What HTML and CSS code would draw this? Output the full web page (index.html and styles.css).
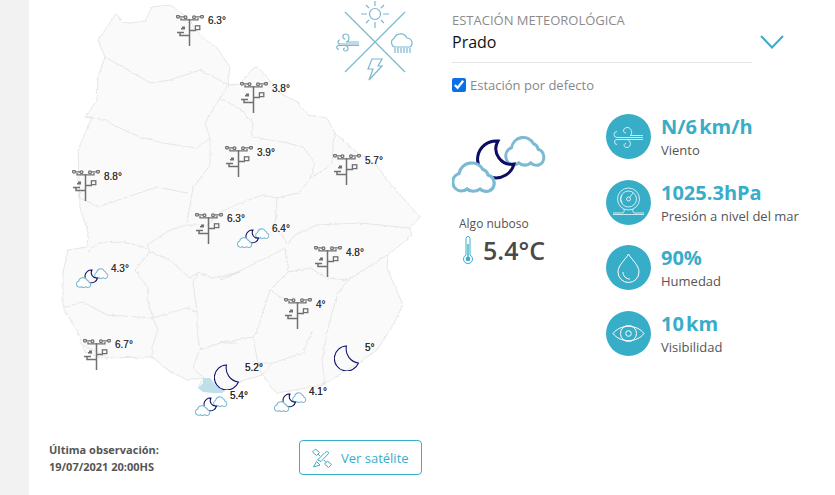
FILE: index.html
```html
<!DOCTYPE html>
<html lang="es">
<head>
<meta charset="utf-8">
<title>Estación meteorológica</title>
<link rel="stylesheet" href="styles.css">
</head>
<body>
<svg class="defs" width="0" height="0" aria-hidden="true">
  <defs>
    <filter id="rough" x="-5%" y="-5%" width="110%" height="110%" color-interpolation-filters="sRGB">
      <feTurbulence type="fractalNoise" baseFrequency="0.2" numOctaves="2" seed="4"/>
      <feDisplacementMap in="SourceGraphic" scale="3" xChannelSelector="R" yChannelSelector="G"/>
    </filter>
    <symbol id="station" viewBox="0 0 28 31">
      <g fill="none" stroke="#707070" stroke-width="1.300">
        <circle cx="2" cy="1.700" r="1.400"/><circle cx="9.500" cy="2.200" r="1.400"/><circle cx="18" cy="2.200" r="1.400"/><circle cx="26" cy="1.700" r="1.400"/>
        <path d="M3.500 1.800H8M19.500 1.800H24.500M5 3V4.800H22V3"/>
        <rect x="19.400" y="10.800" width="4.400" height="3.800"/>
      </g>
      <path d="M13.500 4V31M13.500 15.500H20M13.500 20.500H4V17.500M1 17.500H8M5 13.800H9M6 12.200H9" fill="none" stroke="#707070" stroke-width="1.500"/>
    </symbol>
    <path id="cloud" d="M9 56A9 9 0 0 1 7 38.500A13 13 0 0 1 31 34.500A7.500 7.500 0 0 1 36 40A8.500 8.500 0 0 1 37 56C33 57 30 56 28 54C24 57 18 57 15 54C13 56 11 56 9 56Z"/>
    <symbol id="cloudmoon" viewBox="0 0 95 58">
      <use href="#cloud" transform="translate(53 -25) scale(.92 .98)" fill="#fff" stroke="#7cb9d2" stroke-width="3.200"/>
      <path d="M46 6A18.500 18.500 0 1 0 62 29A15.500 15.500 0 0 1 46 6Z" fill="none" stroke="#0c0c66" stroke-width="3"/>
      <use href="#cloud" fill="#fff" stroke="#7cb9d2" stroke-width="3.200"/>
    </symbol>
    <symbol id="moon" viewBox="0 0 25 26">
      <path d="M12.500 1A12.500 12.500 0 1 0 24.500 18A14 14 0 0 1 12.500 1Z" fill="none" stroke="#14146e" stroke-width="1.100"/>
    </symbol>
  </defs>
</svg>

<div class="page">
  <aside class="strip"></aside>
  <section class="map-col">
    <div class="canvas">
      <svg class="country" viewBox="29 0 411 440" width="411" height="440" aria-hidden="true">
        <g filter="url(#rough)" stroke="#e6e6e6" stroke-width="1" stroke-linejoin="round" fill="none">
          <path fill="#fafafa" d="M116 14L122 22L130 23L145 21L152 7L170 5L187 17L200 35L217 48L230 67L228 85L240 84L253 68L258 67L280 93L297 102L308 115L327 118L335 133L360 155L377 165L385 178L420 217L410 228L412 235L388 255L387 268L403 305L390 330L377 350L358 363L323 385L277 393L262 375L238 382L223 392L198 388L203 378L187 380L168 370L152 357L102 358L85 352L77 330L63 308L63 272L68 250L87 247L88 232L80 208L78 150L92 117L85 117L97 100L98 77L105 57L98 40Z"/>
          <path d="M105 57L125 68L150 83L170 80L200 70L229 85"/>
          <path d="M85 117L107 120L113 125L140 137L163 143L197 148L210 138M229 85L220 98L205 123L210 138L210 165L193 188L187 222"/>
          <path d="M220 98L242 110L253 123L252 137L287 143L303 147L315 163L310 178L300 192L277 198L263 195L243 202L220 212L207 225L187 225L170 230L147 245L150 252L170 260L190 278L198 272L213 278L240 272"/>
          <path d="M335 133L333 143L332 163L328 167L310 178M277 198L275 225L287 243"/>
          <path d="M287 245L295 235L317 225L360 223L410 228M220 280L248 267L285 248L288 272L270 290L258 328L253 337L258 363L262 375M220 280L240 272M288 272L310 268L327 278L348 280L387 255"/>
          <path d="M348 280L337 295L328 328L322 360L325 385M313 330L303 353L273 363L262 375M220 343L253 337M258 363L273 363M285 300L270 290"/>
          <path d="M197 312L197 330L200 350L193 367L203 378M200 350L220 343L238 343M158 330L152 347L152 357M107 357L83 345"/>
          <path d="M80 198L98 207L127 197L157 187L187 193"/>
          <path d="M88 252L98 243L123 242L147 248M150 252L135 270L148 288L147 298L153 318L187 308L197 312L193 282L198 272M63 308L83 302L107 315L153 318L158 330"/>
        </g>
        <path fill="#bfe0ea" d="M198 388L203 383L203 378L210 378L215 385L225 390L222 393L213 393L203 392Z"/>
      </svg>

      <svg class="compass" viewBox="335 0 82 85" width="82" height="85" aria-hidden="true">
        <g fill="none" stroke="#7ab8d0" stroke-width="1.200">
          <path d="M345 12L405 72M405 12L345 72"/>
          <circle cx="375" cy="14" r="5.500"/>
          <path d="M375 1V6M375 22V28M361 14H367M383 14H389M366 5L369 8M384 5L381 8M366 23L369 20M384 23L381 20"/>
          <path d="M359 42H346C350 41.500 350 34 345.500 34C342 34 342 39 345.500 39"/>
          <path d="M359 44H340A2 2 0 1 1 340 40"/>
          <path d="M359 45.500H339A1.800 1.800 0 1 0 339 49"/>
          <path d="M345 45.500C349 46 349 51 345.500 51C343 51 343 48 345 48"/>
          <path d="M396 47A4.500 4.500 0 0 1 394 38.500A7 7 0 0 1 407 38A5 5 0 0 1 410 47Z"/>
          <path d="M395 48V53M398 48V53M401 48V53M404 48V53M407 48V53M410 48V53"/>
          <path d="M372 59H382L378 66H382L369 80L373 69H368Z"/>
        </g>
      </svg>

      <svg class="st s1"><use href="#station"/></svg><span class="tp t1">6.3°</span>
      <svg class="st s2"><use href="#station"/></svg><span class="tp t2">3.8°</span>
      <svg class="st s3"><use href="#station"/></svg><span class="tp t3">3.9°</span>
      <svg class="st s4"><use href="#station"/></svg><span class="tp t4">5.7°</span>
      <svg class="st s5"><use href="#station"/></svg><span class="tp t5">8.8°</span>
      <svg class="st s6"><use href="#station"/></svg><span class="tp t6">6.3°</span>
      <svg class="st s7"><use href="#station"/></svg><span class="tp t7">4.8°</span>
      <svg class="st s8"><use href="#station"/></svg><span class="tp t8">4°</span>
      <svg class="st s9"><use href="#station"/></svg><span class="tp t9">6.7°</span>

      <svg class="cm c1"><use href="#cloudmoon"/></svg><span class="tp t10">4.3°</span>
      <svg class="cm c2"><use href="#cloudmoon"/></svg><span class="tp t11">6.4°</span>
      <svg class="cm c3"><use href="#cloudmoon"/></svg><span class="tp dark t12">5.4°</span>
      <svg class="cm c4"><use href="#cloudmoon"/></svg><span class="tp dark t13">4.1°</span>
      <svg class="mn m1"><use href="#moon"/></svg><span class="tp dark t14">5.2°</span>
      <svg class="mn m2"><use href="#moon"/></svg><span class="tp dark t15">5°</span>
    </div>
    <div class="map-foot">
      <p class="obs">Última observación:<br>19/07/2021 20:00HS</p>
      <button class="sat" type="button">
        <svg viewBox="0 0 20 20" width="20" height="20" aria-hidden="true">
          <g fill="none" stroke="#39aec9" stroke-width="1">
            <path d="M0.500 4L3.500 1L7.500 4.500L4.500 7.500ZM12.500 16L15.500 13L19.500 16.500L16.500 19.500Z"/>
            <path d="M6 6L8 8M12 12L14 14.500"/>
            <path d="M5.500 12L13 4.500C15 3 17 3.500 16.500 5.500L9 13.500Z"/>
            <path d="M4.500 13.500L8 17L1.500 19Z"/>
          </g>
        </svg>
        <span>Ver satélite</span>
      </button>
    </div>
  </section>

  <section class="panel">
    <header class="select">
      <div class="select-text">
        <div class="eyebrow">ESTACIÓN METEOROLÓGICA</div>
        <div class="name">Prado</div>
      </div>
      <svg class="chev" viewBox="0 0 24 14" width="24" height="14" aria-hidden="true"><path d="M1 1L12 12.500L23 1" fill="none" stroke="#39aec9" stroke-width="2"/></svg>
    </header>
    <label class="default"><input type="checkbox" checked><span>Estación por defecto</span></label>

    <div class="details">
      <div class="now">
        <svg class="now-icon"><use href="#cloudmoon"/></svg>
        <div class="cond">Algo nuboso</div>
        <div class="temp">
          <svg viewBox="0 0 10 29" width="10" height="29" aria-hidden="true">
            <path d="M3 2.500a2 2 0 0 1 4 0V19a4.500 4.500 0 1 1-4 0Z" fill="none" stroke="#39aec9" stroke-width="1"/>
            <path d="M5 8V22" stroke="#39aec9" stroke-width="1.400"/><circle cx="5" cy="23" r="2.300" fill="#39aec9"/>
          </svg>
          <span>5.4°C</span>
        </div>
      </div>

      <div class="stats">
        <div class="stat">
          <span class="disc"><svg viewBox="0 0 45 45" width="45" height="45" aria-hidden="true"><g fill="none" stroke="#fff" stroke-opacity=".85" stroke-width=".9">
            <path d="M37 21.500H24C27 21 26 13 21 13.500C17 14 16 18.500 20 19"/>
            <path d="M37 23.500H11A3 3 0 1 1 11 17.500"/>
            <path d="M37 25.500H11A2.500 2.500 0 1 0 11 30.500"/>
            <path d="M21 25.500C25 26 26 33 21 33.500C17.500 34 17 29.500 20 29.500"/>
          </g></svg></span>
          <div><div class="val">N/6 km/h</div><div class="sub">Viento</div></div>
        </div>
        <div class="stat">
          <span class="disc"><svg viewBox="0 0 45 45" width="45" height="45" aria-hidden="true"><g fill="none" stroke="#fff" stroke-opacity=".85" stroke-width=".9">
            <circle cx="22.500" cy="19" r="11"/><circle cx="22.500" cy="19" r="8"/><circle cx="22.500" cy="19" r="2"/>
            <path d="M23.500 17.500L27 13M16 23A7 7 0 0 1 16 15"/>
            <path d="M7 33H16C19 33 18 30 18 29M38 33H29C26 33 27 30 27 29M7 34.500H38"/>
          </g></svg></span>
          <div><div class="val">1025.3hPa</div><div class="sub">Presión a nivel del mar</div></div>
        </div>
        <div class="stat">
          <span class="disc"><svg viewBox="0 0 45 45" width="45" height="45" aria-hidden="true"><g fill="none" stroke="#fff" stroke-width="1">
            <path d="M22.500 9C25 14 33 20 33 27A10.500 10.500 0 0 1 12 27C12 20 20 14 22.500 9Z"/>
            <path d="M17 27C17 31 20 34 24 34"/>
          </g></svg></span>
          <div><div class="val">90%</div><div class="sub">Humedad</div></div>
        </div>
        <div class="stat">
          <span class="disc"><svg viewBox="0 0 45 45" width="45" height="45" aria-hidden="true"><g fill="none" stroke="#fff" stroke-width="1">
            <path d="M7 22.500C14 13 31 13 38 22.500C31 32 14 32 7 22.500Z"/>
            <circle cx="22.500" cy="22.500" r="8"/><circle cx="22.500" cy="22.500" r="2.800"/>
          </g></svg></span>
          <div><div class="val">10 km</div><div class="sub">Visibilidad</div></div>
        </div>
      </div>
    </div>
  </section>
</div>
</body>
</html>
```
FILE: styles.css
```css
* { box-sizing: border-box; }
html, body { margin: 0; height: 100%; background: #fff; overflow: hidden; }
body { font-family: "Open Sans", "Liberation Sans", sans-serif; color: #555; }
.defs { position: absolute; }

.page { display: flex; width: 835px; height: 495px; }
.strip { width: 29px; background: #f2f2f2; flex: none; }

.map-col { width: 411px; flex: none; display: flex; flex-direction: column; }
.canvas { position: relative; height: 440px; flex: none; }
.country { position: absolute; left: 0; top: 0; }
.compass { position: absolute; left: 306px; top: 0; }

.st { position: absolute; width: 28px; height: 31px; }
.cm { position: absolute; width: 33px; height: 20px; }
.mn { position: absolute; width: 25px; height: 26px; }
.tp { position: absolute; font: 10px/12px "Liberation Sans", Arial, sans-serif; color: #333; white-space: nowrap; text-shadow: 0 0 .3px #555; }
.dark { color: #2a2a2a; text-shadow: 0 0 .5px #333; }

.s1 { left: 147px; top: 15px; }  .t1 { left: 179px; top: 15px; }
.s2 { left: 211px; top: 82px; }  .t2 { left: 243px; top: 83px; }
.s3 { left: 196px; top: 146px; } .t3 { left: 228px; top: 147px; }
.s4 { left: 304px; top: 154px; } .t4 { left: 336px; top: 155px; }
.s5 { left: 43px; top: 170px; }  .t5 { left: 75px; top: 171px; }
.s6 { left: 166px; top: 213px; } .t6 { left: 198px; top: 213px; }
.s7 { left: 285px; top: 246px; } .t7 { left: 317px; top: 247px; }
.s8 { left: 255px; top: 298px; } .t8 { left: 287px; top: 299px; }
.s9 { left: 54px; top: 339px; }  .t9 { left: 86px; top: 339px; }
.c1 { left: 47px; top: 268px; }  .t10 { left: 82px; top: 263px; }
.c2 { left: 208px; top: 228px; } .t11 { left: 243px; top: 223px; }
.c3 { left: 166px; top: 396px; } .t12 { left: 201px; top: 390px; }
.c4 { left: 245px; top: 392px; } .t13 { left: 280px; top: 386px; }
.m1 { left: 185px; top: 364px; } .t14 { left: 216px; top: 362px; }
.m2 { left: 305px; top: 345px; } .t15 { left: 336px; top: 342px; }

.map-foot { display: flex; justify-content: space-between; align-items: flex-start; padding: 0 18px 0 20px; }
.obs { margin: 1px 0 0; font-size: 11px; line-height: 17px; font-weight: 700; color: #555; }
.sat { display: flex; align-items: center; gap: 9px; width: 123px; height: 35px; padding: 0 0 0 12px; border: 1px solid #39aec9; border-radius: 4px; background: #fff; color: #39aec9; font: 13px "Open Sans", sans-serif; }

.panel { flex: 1; padding: 11px 0 0 12px; }
.select { width: 332px; display: flex; justify-content: space-between; align-items: flex-start; }
.select-text { width: 300px; height: 52px; border-bottom: 1px solid #e5e5e5; }
.eyebrow { font-size: 13px; line-height: 18px; color: #8b8b8b; }
.name { font-size: 16px; line-height: 26px; color: #111; }
.chev { margin-top: 24px; }

.default { display: flex; align-items: center; gap: 4px; margin-top: 13px; height: 18px; font-size: 13px; color: #888; }
.default input { width: 14px; height: 14px; margin: 0; accent-color: #0b6fe6; }

.details { display: flex; margin-top: 20px; }
.now { width: 154px; padding-top: 21px; }
.now-icon { display: block; width: 95px; height: 58px; }
.cond { margin: 23px 0 0 7px; font-size: 12px; line-height: 16px; color: #555; }
.temp { display: flex; align-items: center; gap: 10px; margin: 3px 0 0 11px; color: #4a4a4a; font-size: 25px; font-weight: 600; line-height: 30px; }

.stats { display: flex; flex-direction: column; gap: 20.700px; }
.stat { display: flex; gap: 10px; height: 45px; }
.disc { width: 45px; height: 45px; border-radius: 50%; background: #38adc8; flex: none; }
.val { font-size: 20px; font-weight: 700; line-height: 26px; color: #38adc8; word-spacing: -3px; }
.sub { font-size: 13px; line-height: 20px; color: #555; }
```
